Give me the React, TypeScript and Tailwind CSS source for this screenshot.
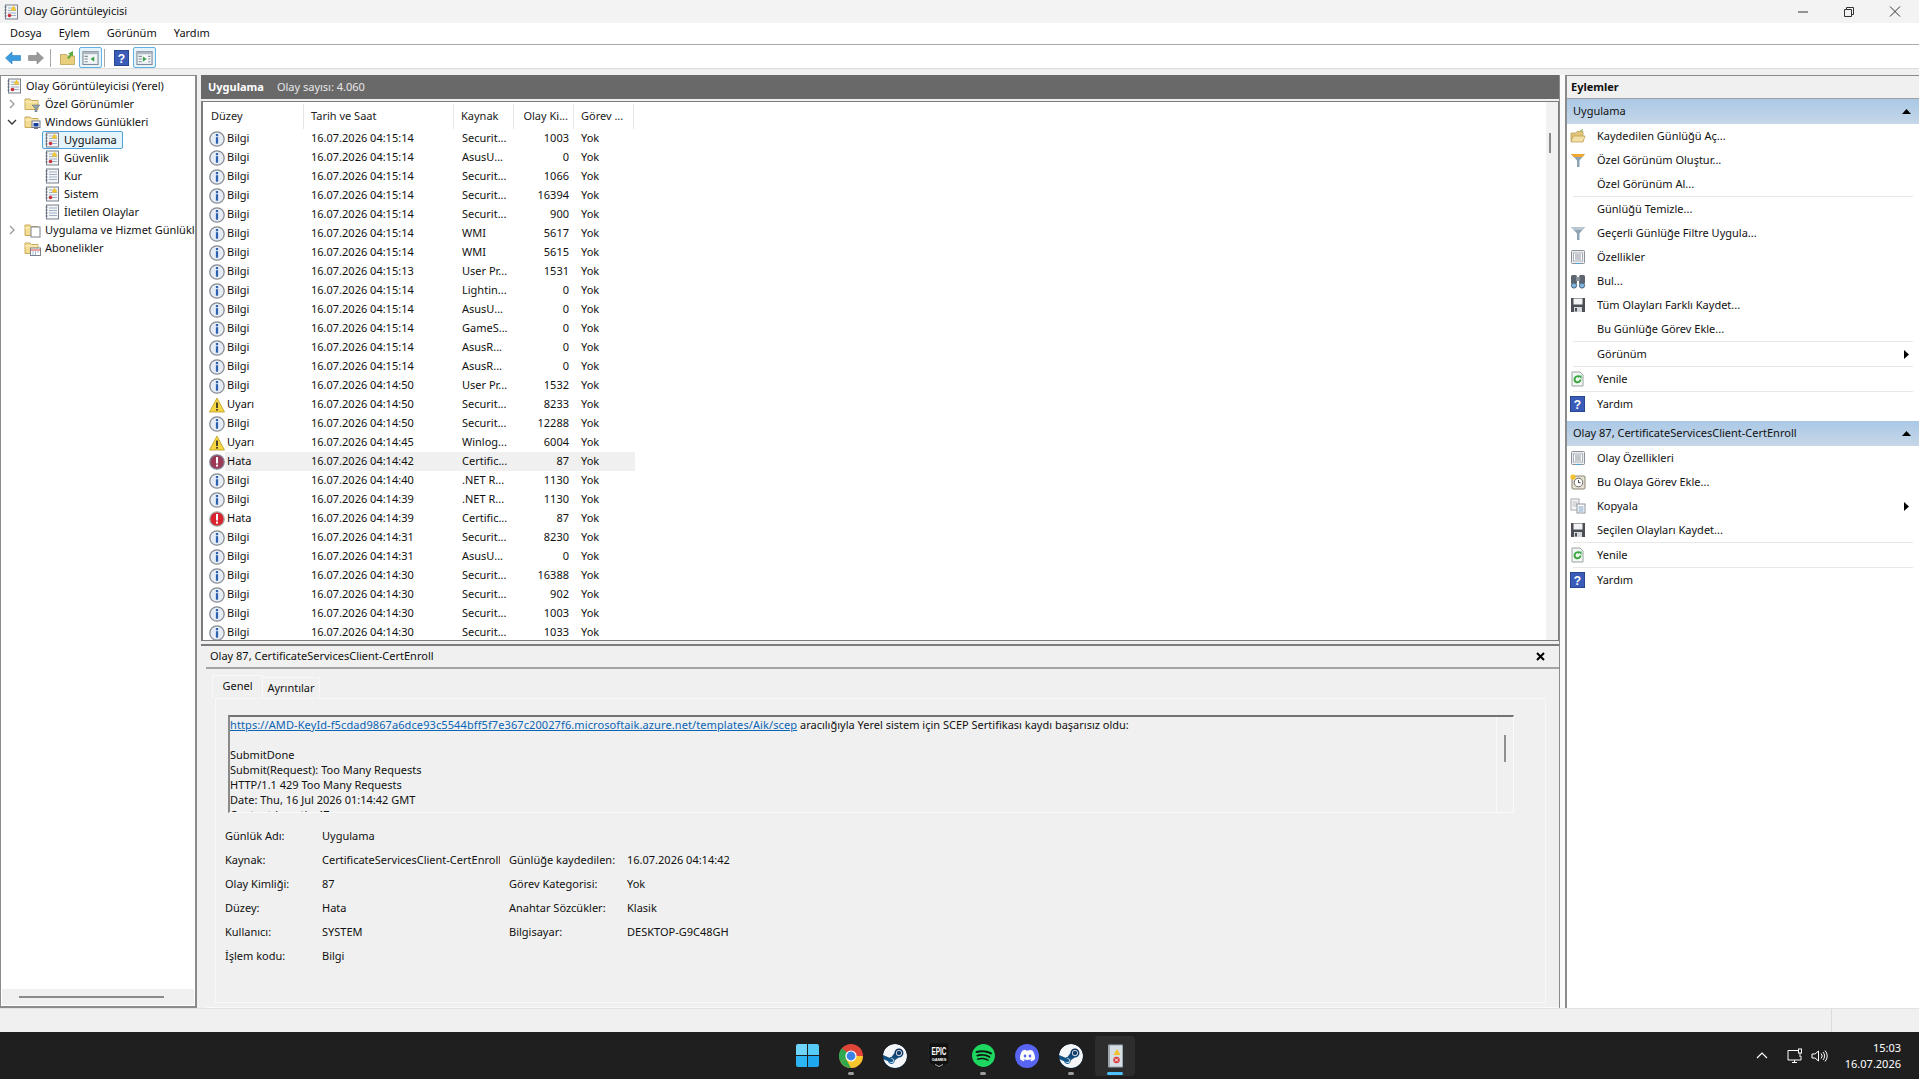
import { SiDiscord, SiSpotify, SiSteam } from 'react-icons/si';

type Level = 'Bilgi' | 'Uyarı' | 'Hata';

const rows: [Level, string, string, string][] = [
  ['Bilgi', '16.07.2026 04:15:14', 'Securit...', '1003'],
  ['Bilgi', '16.07.2026 04:15:14', 'AsusU...', '0'],
  ['Bilgi', '16.07.2026 04:15:14', 'Securit...', '1066'],
  ['Bilgi', '16.07.2026 04:15:14', 'Securit...', '16394'],
  ['Bilgi', '16.07.2026 04:15:14', 'Securit...', '900'],
  ['Bilgi', '16.07.2026 04:15:14', 'WMI', '5617'],
  ['Bilgi', '16.07.2026 04:15:14', 'WMI', '5615'],
  ['Bilgi', '16.07.2026 04:15:13', 'User Pr...', '1531'],
  ['Bilgi', '16.07.2026 04:15:14', 'Lightin...', '0'],
  ['Bilgi', '16.07.2026 04:15:14', 'AsusU...', '0'],
  ['Bilgi', '16.07.2026 04:15:14', 'GameS...', '0'],
  ['Bilgi', '16.07.2026 04:15:14', 'AsusR...', '0'],
  ['Bilgi', '16.07.2026 04:15:14', 'AsusR...', '0'],
  ['Bilgi', '16.07.2026 04:14:50', 'User Pr...', '1532'],
  ['Uyarı', '16.07.2026 04:14:50', 'Securit...', '8233'],
  ['Bilgi', '16.07.2026 04:14:50', 'Securit...', '12288'],
  ['Uyarı', '16.07.2026 04:14:45', 'Winlog...', '6004'],
  ['Hata', '16.07.2026 04:14:42', 'Certific...', '87'],
  ['Bilgi', '16.07.2026 04:14:40', '.NET R...', '1130'],
  ['Bilgi', '16.07.2026 04:14:39', '.NET R...', '1130'],
  ['Hata', '16.07.2026 04:14:39', 'Certific...', '87'],
  ['Bilgi', '16.07.2026 04:14:31', 'Securit...', '8230'],
  ['Bilgi', '16.07.2026 04:14:31', 'AsusU...', '0'],
  ['Bilgi', '16.07.2026 04:14:30', 'Securit...', '16388'],
  ['Bilgi', '16.07.2026 04:14:30', 'Securit...', '902'],
  ['Bilgi', '16.07.2026 04:14:30', 'Securit...', '1003'],
  ['Bilgi', '16.07.2026 04:14:30', 'Securit...', '1033'],
];

function InfoIcon() {
  return (
    <svg width="16" height="16" viewBox="0 0 16 16" className="shrink-0">
      <circle cx="8" cy="8" r="7.2" fill="#e6ecf5" stroke="#85898f" strokeWidth="1.3" />
      <rect x="6.9" y="3" width="2.2" height="2.2" fill="#2d62b0" />
      <rect x="6.9" y="6.2" width="2.2" height="6.5" fill="#2d62b0" />
    </svg>
  );
}

function WarnIcon() {
  return (
    <svg width="16" height="16" viewBox="0 0 16 16" className="shrink-0">
      <path d="M8 1 L15.5 15 H0.5 Z" fill="#f6d743" stroke="#b99a1c" strokeWidth="0.8" />
      <rect x="7.2" y="5.5" width="1.6" height="5.5" fill="#222" />
      <rect x="7.2" y="12" width="1.6" height="1.6" fill="#222" />
    </svg>
  );
}

function ErrorIcon({ dim }: { dim?: boolean }) {
  return (
    <svg width="16" height="16" viewBox="0 0 16 16" className="shrink-0">
      <circle cx="8" cy="8" r="7.2" fill={dim ? '#9c3a55' : '#d9232e'} stroke={dim ? '#7f8296' : '#a8a8a8'} strokeWidth="1.3" />
      <rect x="7" y="3" width="2" height="6.5" fill="#fff" />
      <rect x="7" y="10.6" width="2" height="2" fill="#fff" />
    </svg>
  );
}

function LogIcon({ alert = true }: { alert?: boolean }) {
  return (
    <svg width="15" height="16" viewBox="0 0 15 16" className="shrink-0">
      <rect x="1.5" y="1" width="12" height="14" fill="#f4f5f7" stroke="#77808c" />
      <path d="M0.5 3h2M0.5 6h2M0.5 9h2M0.5 12h2" stroke="#5b6470" />
      <path d="M4 4h8M4 6.5h8M4 9h8M4 11.5h8" stroke="#9fb0c4" />
      {alert && <path d="M9.5 1.5l3 5h-6z" fill="#f2c62f" />}
      {alert && <circle cx="5.5" cy="11.5" r="1.8" fill="#c8303a" />}
    </svg>
  );
}

function FolderIcon({ overlay }: { overlay?: 'filter' | 'pc' | 'doc' | 'cal' }) {
  return (
    <svg width="17" height="16" viewBox="0 0 17 16" className="shrink-0">
      <path d="M1 3h5l1.5 1.5H14v9H1z" fill="#f3dc94" stroke="#c9a95a" />
      <path d="M1 6h13" stroke="#fff2c4" />
      {overlay === 'filter' && <path d="M8 9h8l-3 3.2V16h-2v-3.8z" fill="#8fa3ad" stroke="#5c6b73" strokeWidth="0.5" />}
      {overlay === 'pc' && (
        <g>
          <rect x="8" y="7" width="8" height="6.5" fill="#fff" stroke="#6d7785" />
          <rect x="9.5" y="9" width="5" height="3.5" fill="#123f9e" />
          <rect x="10" y="14" width="4" height="1" fill="#6d7785" />
        </g>
      )}
      {overlay === 'doc' && <rect x="7" y="5" width="9" height="10" fill="#fff" stroke="#7a838c" />}
      {overlay === 'cal' && (
        <g>
          <rect x="6.5" y="8" width="10" height="7.5" fill="#fff" stroke="#7a838c" />
          <path d="M6.5 10h10" stroke="#d0463c" />
          <path d="M8.5 12h1M11 12h1M13.5 12h1M8.5 14h1M11 14h1" stroke="#3e74b8" />
        </g>
      )}
    </svg>
  );
}

function Chevron({ open }: { open?: boolean }) {
  return (
    <svg width="10" height="10" viewBox="0 0 10 10" className="shrink-0">
      {open ? (
        <path d="M1 3l4 4 4-4" fill="none" stroke="#333" strokeWidth="1.3" />
      ) : (
        <path d="M3 1l4 4-4 4" fill="none" stroke="#9a9a9a" strokeWidth="1.3" />
      )}
    </svg>
  );
}

function HelpIcon() {
  return (
    <svg width="15" height="16" viewBox="0 0 15 16" className="shrink-0">
      <rect x="0.5" y="0.5" width="14" height="15" fill="#3a5cb8" stroke="#2a4590" />
      <text x="7.5" y="12.5" textAnchor="middle" fontSize="12" fontWeight="700" fill="#fff" fontFamily="Liberation Sans">?</text>
    </svg>
  );
}

function RefreshIcon() {
  return (
    <svg width="15" height="16" viewBox="0 0 15 16" className="shrink-0">
      <path d="M2 1h8l3 3v11H2z" fill="#f3f7f3" stroke="#9aa5a0" />
      <path d="M10.5 8.5a3 3 0 1 1-1-2.4" fill="none" stroke="#39a843" strokeWidth="2" />
      <path d="M8 4.5h3.5V8z" fill="#39a843" />
    </svg>
  );
}

function PropsIcon() {
  return (
    <svg width="16" height="16" viewBox="0 0 16 16" className="shrink-0">
      <rect x="1.5" y="1.5" width="13" height="13" rx="1" fill="#eceef0" stroke="#8a9098" />
      <rect x="3.5" y="4" width="9" height="8" fill="#fff" stroke="#a8aeb5" />
      <path d="M5 6h6M5 8h6M5 10h6" stroke="#8a9098" />
      <rect x="6" y="14" width="4" height="1" fill="#4aa3df" />
    </svg>
  );
}

function SaveIcon() {
  return (
    <svg width="16" height="16" viewBox="0 0 16 16" className="shrink-0">
      <path d="M1 1h14v14H1z" fill="#4c4f55" />
      <rect x="3.5" y="1.5" width="9" height="6" fill="#f2f3f5" />
      <rect x="4" y="10" width="8" height="5" fill="#d5d8dc" />
      <rect x="5" y="11" width="2" height="3.5" fill="#4c4f55" />
    </svg>
  );
}

function FilterIcon({ tint }: { tint?: boolean }) {
  return (
    <svg width="16" height="16" viewBox="0 0 16 16" className="shrink-0">
      <path d="M1 2h14L9.5 8.5V15H7V8.5z" fill="#8ea3b3" />
      <path d="M1 2h14l-2.6 3H3.6z" fill={tint ? '#f0a92e' : '#b9c7d2'} />
    </svg>
  );
}

function OpenFolderIcon() {
  return (
    <svg width="16" height="16" viewBox="0 0 16 16" className="shrink-0">
      <path d="M1 5h5l1-1.5h6V13H1z" fill="#e2c579" stroke="#b7994f" strokeWidth="0.7" />
      <path d="M1 14l2-6h12l-2 6z" fill="#f2dfa4" stroke="#b7994f" strokeWidth="0.7" />
      <path d="M10 3l3-1.5" stroke="#6ab04c" />
    </svg>
  );
}

function BinocularsIcon() {
  return (
    <svg width="16" height="16" viewBox="0 0 16 16" className="shrink-0">
      <rect x="1" y="2" width="6" height="9" rx="1.5" fill="#5d6570" />
      <rect x="9" y="2" width="6" height="9" rx="1.5" fill="#5d6570" />
      <rect x="6" y="4" width="4" height="4" fill="#8b929c" />
      <circle cx="4" cy="12.5" r="2.6" fill="#7fb6e2" stroke="#4b6277" />
      <circle cx="12" cy="12.5" r="2.6" fill="#7fb6e2" stroke="#4b6277" />
    </svg>
  );
}

function TaskIcon() {
  return (
    <svg width="16" height="16" viewBox="0 0 16 16" className="shrink-0">
      <rect x="2" y="2" width="13" height="13" rx="1" fill="#e8e2d4" stroke="#8b8578" />
      <circle cx="8.5" cy="8.5" r="4.3" fill="#fff" stroke="#6b6b6b" />
      <path d="M8.5 6v2.7h2.2" fill="none" stroke="#444" />
      <circle cx="3" cy="3" r="2.6" fill="#f3c22e" />
    </svg>
  );
}

function CopyIcon() {
  return (
    <svg width="16" height="16" viewBox="0 0 16 16" className="shrink-0">
      <rect x="1" y="1" width="8" height="11" fill="#f7f7f7" stroke="#a5a9ae" />
      <path d="M2.5 4h5M2.5 6h5M2.5 8h5" stroke="#b9bdc2" />
      <rect x="7" y="6" width="8" height="9" fill="#fff" stroke="#8d949c" />
      <path d="M8.5 9h5M8.5 11h5M8.5 13h5" stroke="#7b9cc0" />
    </svg>
  );
}

function ToolButton({ side }: { side: 'left' | 'right' }) {
  return (
    <div className="flex h-[21px] w-[23px] items-center justify-center rounded-[2px] border border-[#66b1e3] bg-[#e5f3fb]">
      <svg width="17" height="14" viewBox="0 0 15 13">
        <rect x="0.5" y="0.5" width="14" height="12" fill="#f3f6f8" stroke="#7f8a94" />
        <rect x="0.5" y="0.5" width="14" height="2.5" fill="#aeb8c2" />
        <path d="M2 5h3M2 7.5h3M2 10h3" stroke="#7f8a94" />
        {side === 'left' ? <path d="M11 5v5L7.5 7.5z" fill="#3aa14a" /> : <path d="M6 5v5l3.5-2.5z" fill="#3aa14a" />}
        <path d="M11 5h2M11 7.5h2M11 10h2" stroke={side === 'left' ? 'none' : '#7f8a94'} />
      </svg>
    </div>
  );
}

function Toolbar() {
  return (
    <div className="flex h-[24px] items-center border-b border-[#dcdcdc] bg-white pl-[5px] pt-[2px]">
      <svg width="16" height="14" viewBox="0 0 16 14">
        <path d="M0.5 7L7 1v3.5h8.5v5H7V13z" fill="#3a9be0" stroke="#2a7cbc" strokeWidth="0.6" />
      </svg>
      <svg width="16" height="14" viewBox="0 0 16 14" className="ml-[7px]">
        <path d="M15.5 7L9 1v3.5H0.5v5H9V13z" fill="#9a9a9a" stroke="#7d7d7d" strokeWidth="0.6" />
      </svg>
      <div className="ml-[6px] h-[18px] w-px bg-[#a8a8a8]" />
      <svg width="15" height="15" viewBox="0 0 15 15" className="ml-[9px]">
        <path d="M0.5 4.5h6l1 1.5h7v8.5H0.5z" fill="#e9cf7b" stroke="#b1954a" strokeWidth="0.7" />
        <path d="M7 8l3-3.5-2-.8 5-2.7v5.5l-1.5-1L9 9z" fill="#58a83c" />
      </svg>
      <div className="ml-[4px]">
        <ToolButton side="left" />
      </div>
      <div className="ml-[2px] h-[18px] w-px bg-[#a8a8a8]" />
      <div className="ml-[9px]">
        <HelpIcon />
      </div>
      <div className="ml-[4px]">
        <ToolButton side="right" />
      </div>
    </div>
  );
}

function TreeRow({ indent, chevron, icon, label, selected }: { indent: string; chevron?: 'open' | 'closed'; icon: React.ReactNode; label: string; selected?: boolean }) {
  return (
    <div className={`flex h-[18px] items-center whitespace-nowrap ${indent}`}>
      {chevron && (
        <span className="ml-[6px] mr-[7px] flex">
          <Chevron open={chevron === 'open'} />
        </span>
      )}
      {selected ? (
        <div className="flex h-[18px] w-[81px] items-center rounded-[2px] border border-[#4da3dc] bg-[#e5f3fb] pl-[2px]">
          {icon}
          <span className="ml-[4px]">{label}</span>
        </div>
      ) : (
        <>
          {icon}
          <span className="ml-[4px]">{label}</span>
        </>
      )}
    </div>
  );
}

function TreePanel() {
  return (
    <div className="flex w-[197px] shrink-0 flex-col border-b-2 border-l border-r-2 border-t border-[#8b8b8b] bg-white">
      <div className="flex-1 overflow-hidden pt-[1px]">
        <TreeRow indent="pl-[6px]" icon={<LogIcon />} label="Olay Görüntüleyicisi (Yerel)" />
        <TreeRow indent="" chevron="closed" icon={<FolderIcon overlay="filter" />} label="Özel Görünümler" />
        <TreeRow indent="" chevron="open" icon={<FolderIcon overlay="pc" />} label="Windows Günlükleri" />
        <TreeRow indent="pl-[41px]" icon={<LogIcon />} label="Uygulama" selected />
        <TreeRow indent="pl-[44px]" icon={<LogIcon />} label="Güvenlik" />
        <TreeRow indent="pl-[44px]" icon={<LogIcon alert={false} />} label="Kur" />
        <TreeRow indent="pl-[44px]" icon={<LogIcon />} label="Sistem" />
        <TreeRow indent="pl-[44px]" icon={<LogIcon alert={false} />} label="İletilen Olaylar" />
        <TreeRow indent="" chevron="closed" icon={<FolderIcon overlay="doc" />} label="Uygulama ve Hizmet Günlükleri" />
        <TreeRow indent="pl-[23px]" icon={<FolderIcon overlay="cal" />} label="Abonelikler" />
      </div>
      <div className="mx-[1px] mb-[1px] flex h-[16px] items-center bg-[#f0f0f0] pl-[17px]">
        <div className="h-[2px] w-[145px] bg-[#8a8a8a]" />
      </div>
    </div>
  );
}

function EventList() {
  return (
    <div className="flex h-[540px] border border-l-2 border-[#7c7c7c] bg-white">
      <div className="min-w-0 flex-1 overflow-hidden pt-[2px]">
        <div className="flex h-[25px] items-start text-[#222]">
          <div className="h-full w-[101px] border-r border-[#e6e6e6] pl-[8px] leading-[23px]">Düzey</div>
          <div className="h-full w-[150px] border-r border-[#e6e6e6] pl-[7px] leading-[23px]">Tarih ve Saat</div>
          <div className="h-full w-[60px] border-r border-[#e6e6e6] pl-[7px] leading-[23px]">Kaynak</div>
          <div className="h-full w-[60px] border-r border-[#e6e6e6] pr-[5px] text-right leading-[23px]">Olay Ki...</div>
          <div className="h-full w-[60px] border-r border-[#e6e6e6] pl-[7px] leading-[23px]">Görev ...</div>
        </div>
        {rows.map((r, i) => (
          <div key={i} className="flex h-[19px] items-center">
            <div className="flex w-[101px] items-center pl-[6px]">
              {r[0] === 'Bilgi' && <InfoIcon />}
              {r[0] === 'Uyarı' && <WarnIcon />}
              {r[0] === 'Hata' && <ErrorIcon dim={i === 17} />}
              <span className={i === 17 ? 'flex h-[19px] flex-1 items-center bg-[#f0f0f0] pl-[2px]' : 'ml-[2px]'}>{r[0]}</span>
            </div>
            <div className={`flex h-[19px] items-center ${i === 17 ? 'bg-[#f0f0f0]' : ''}`}>
              <div className="w-[150px] pl-[7px]">{r[1]}</div>
              <div className="w-[60px] whitespace-nowrap pl-[8px]">{r[2]}</div>
              <div className="w-[60px] pr-[5px] text-right">{r[3]}</div>
              <div className="w-[61px] pl-[7px]">Yok</div>
            </div>
          </div>
        ))}
      </div>
      <div className="w-[12px] bg-[#f2f2f2] pl-[3px] pt-[31px]">
        <div className="h-[20px] w-[2px] bg-[#8a8a8a]" />
      </div>
    </div>
  );
}

function MessageBox() {
  return (
    <div className="flex h-[98px] overflow-hidden border-b border-l-2 border-r border-t-2 border-b-[#fafafa] border-l-[#8a8a8a] border-r-[#fafafa] border-t-[#737373]">
      <div className="min-w-0 flex-1 overflow-hidden leading-[15px]">
        <div className="whitespace-nowrap">
          <span className="tracking-[0.1px] text-[#0a64b4] underline">https://AMD-KeyId-f5cdad9867a6dce93c5544bff5f7e367c20027f6.microsoftaik.azure.net/templates/Aik/scep</span> aracılığıyla Yerel sistem için SCEP Sertifikası kaydı başarısız oldu:
        </div>
        <div className="mt-[15px]">SubmitDone</div>
        <div>Submit(Request): Too Many Requests</div>
        <div>HTTP/1.1 429 Too Many Requests</div>
        <div>Date: Thu, 16 Jul 2026 01:14:42 GMT</div>
        <div>Content-Length: 47</div>
      </div>
      <div className="w-[17px] border-l border-[#fafafa] pl-[7px] pt-[18px]">
        <div className="h-[27px] w-[2px] bg-[#8e8e8e]" />
      </div>
    </div>
  );
}

function Field({ label, value, label2, value2 }: { label: string; value: string; label2?: string; value2?: string }) {
  return (
    <div className="grid h-[24px] grid-cols-[97px_187px_118px_1fr] items-center">
      <div>{label}</div>
      <div className="w-[178px] overflow-hidden whitespace-nowrap">{value}</div>
      <div>{label2}</div>
      <div>{value2}</div>
    </div>
  );
}

function DetailPanel() {
  return (
    <div className="mt-[3px] flex flex-1 flex-col border-t-2 border-[#7c7c7c] bg-[#f0f0f0] pl-[5px]">
      <div className="flex h-[23px] items-center justify-between border-b-2 border-[#a3a3a3] pl-[4px] pr-[14px]">
        <span>Olay 87, CertificateServicesClient-CertEnroll</span>
        <svg width="9" height="9" viewBox="0 0 9 9">
          <path d="M1 1l7 7M8 1l-7 7" stroke="#000" strokeWidth="2" />
        </svg>
      </div>
      <div className="flex h-[29px] items-end pl-[6px]">
        <div className="flex h-[23px] w-[51px] items-center justify-center border-x border-t border-[#f8f8f8] bg-[#f0f0f0] pb-[2px]">Genel</div>
        <div className="flex h-[21px] w-[57px] items-center justify-center border-r border-t border-[#f8f8f8]">Ayrıntılar</div>
      </div>
      <div className="ml-[9px] mr-[13px] flex-1 border border-[#f8f8f8] px-[9px] pt-[16px]">
        <div className="ml-[3px] mr-[22px]">
          <MessageBox />
        </div>
        <div className="mt-[11px]">
          <Field label="Günlük Adı:" value="Uygulama" />
          <Field label="Kaynak:" value="CertificateServicesClient-CertEnroll" label2="Günlüğe kaydedilen:" value2="16.07.2026 04:14:42" />
          <Field label="Olay Kimliği:" value="87" label2="Görev Kategorisi:" value2="Yok" />
          <Field label="Düzey:" value="Hata" label2="Anahtar Sözcükler:" value2="Klasik" />
          <Field label="Kullanıcı:" value="SYSTEM" label2="Bilgisayar:" value2="DESKTOP-G9C48GH" />
          <Field label="İşlem kodu:" value="Bilgi" />
        </div>
      </div>
      <div className="h-[5px] border-b border-[#fafafa]" />
    </div>
  );
}

function SectionHead({ title }: { title: string }) {
  return (
    <div className="flex h-[25px] items-center justify-between bg-gradient-to-b from-[#aac8e6] to-[#c6d7e8] pl-[6px] pr-[8px]">
      <span>{title}</span>
      <svg width="9" height="5" viewBox="0 0 9 5">
        <path d="M0 5L4.5 0 9 5z" fill="#000" />
      </svg>
    </div>
  );
}

function Action({ icon, label, arrow, sep }: { icon?: React.ReactNode; label: string; arrow?: boolean; sep?: boolean }) {
  return (
    <>
      <div className="flex h-[24px] items-center pr-[10px]">
        <span className="flex w-[30px] justify-start pl-[3px]">{icon}</span>
        <span className="flex-1">{label}</span>
        {arrow && (
          <svg width="5" height="9" viewBox="0 0 5 9">
            <path d="M0 0l5 4.5L0 9z" fill="#000" />
          </svg>
        )}
      </div>
      {sep && <div className="ml-[6px] mr-[6px] h-px bg-[#e8e8e8]" />}
    </>
  );
}

function ActionsPanel() {
  return (
    <div className="flex-1 border-l-2 border-t border-[#8b8b8b] bg-white">
      <div className="flex h-[23px] items-center border-b border-[#a0a0a0] bg-[#f0f0f0] pl-[4px] font-bold">Eylemler</div>
      <SectionHead title="Uygulama" />
      <Action icon={<OpenFolderIcon />} label="Kaydedilen Günlüğü Aç..." />
      <Action icon={<FilterIcon tint />} label="Özel Görünüm Oluştur..." />
      <Action label="Özel Görünüm Al..." sep />
      <Action label="Günlüğü Temizle..." />
      <Action icon={<FilterIcon />} label="Geçerli Günlüğe Filtre Uygula..." />
      <Action icon={<PropsIcon />} label="Özellikler" />
      <Action icon={<BinocularsIcon />} label="Bul..." />
      <Action icon={<SaveIcon />} label="Tüm Olayları Farklı Kaydet..." />
      <Action label="Bu Günlüğe Görev Ekle..." sep />
      <Action label="Görünüm" arrow sep />
      <Action icon={<RefreshIcon />} label="Yenile" sep />
      <Action icon={<HelpIcon />} label="Yardım" />
      <div className="h-[5px]" />
      <SectionHead title="Olay 87, CertificateServicesClient-CertEnroll" />
      <Action icon={<PropsIcon />} label="Olay Özellikleri" />
      <Action icon={<TaskIcon />} label="Bu Olaya Görev Ekle..." />
      <Action icon={<CopyIcon />} label="Kopyala" arrow />
      <Action icon={<SaveIcon />} label="Seçilen Olayları Kaydet..." sep />
      <Action icon={<RefreshIcon />} label="Yenile" sep />
      <Action icon={<HelpIcon />} label="Yardım" />
    </div>
  );
}

function TaskItem({ children, dot, active }: { children: React.ReactNode; dot?: boolean; active?: boolean }) {
  return (
    <div className={`relative flex h-[40px] w-[40px] items-center justify-center rounded-[4px] ${active ? 'bg-[#2d2d2d]' : ''}`}>
      {children}
      {dot && <div className="absolute bottom-[1px] h-[3px] w-[6px] rounded-full bg-[#9d9d9d]" />}
      {active && <div className="absolute bottom-[1px] h-[3px] w-[16px] rounded-full bg-[#4cc2ff]" />}
    </div>
  );
}

function SteamLogo() {
  return (
    <div className="h-[24px] w-[24px] overflow-hidden rounded-full bg-gradient-to-b from-[#0e1f44] to-[#1074b0]">
      <SiSteam size={24} color="#f4f6f8" />
    </div>
  );
}

function Taskbar() {
  return (
    <div className="grid h-[47px] grid-cols-[1fr_auto_1fr] items-center bg-[#1f1f1f] text-white">
      <div />
      <div className="ml-[3px] flex gap-[4px]">
        <TaskItem>
          <div className="grid grid-cols-2 gap-[1px]">
            <div className="h-[11px] w-[11px] rounded-tl-[2px] bg-[#6fd6fb]" />
            <div className="h-[11px] w-[11px] rounded-tr-[2px] bg-[#55cdf8]" />
            <div className="h-[11px] w-[11px] rounded-bl-[2px] bg-[#2db5f3]" />
            <div className="h-[11px] w-[11px] rounded-br-[2px] bg-[#1ea7ee]" />
          </div>
        </TaskItem>
        <TaskItem dot>
          <svg width="24" height="24" viewBox="0 0 24 24">
            <circle cx="12" cy="12" r="12" fill="#e0453a" />
            <path d="M12 12L1.6 18A12 12 0 0 1 3 4.2z" fill="#2fa84f" />
            <path d="M12 12h12A12 12 0 0 1 12 24 12 12 0 0 1 1.6 18z" fill="#f7c52c" />
            <path d="M12 24A12 12 0 0 1 1.6 18L7 15z" fill="#2fa84f" />
            <circle cx="12" cy="12" r="5.6" fill="#fff" />
            <circle cx="12" cy="12" r="4.4" fill="#3b82e6" />
          </svg>
        </TaskItem>
        <TaskItem>
          <SteamLogo />
        </TaskItem>
        <TaskItem>
          <svg width="22" height="26" viewBox="0 0 22 26">
            <path d="M1 0h20v20l-10 6-10-6z" fill="#111" stroke="#333" strokeWidth="0.5" />
            <text x="11" y="11.5" textAnchor="middle" fontSize="10" fontWeight="700" fill="#fff" fontFamily="Liberation Sans Narrow, Liberation Sans" textLength="15" lengthAdjust="spacingAndGlyphs">EPIC</text>
            <text x="11" y="17.5" textAnchor="middle" fontSize="4" fontWeight="700" fill="#fff" fontFamily="Liberation Sans">GAMES</text>
            <path d="M7 21.5l4 2 4-2" stroke="#fff" strokeWidth="0.7" fill="none" />
          </svg>
        </TaskItem>
        <TaskItem dot>
          <div className="flex h-[23px] w-[23px] items-center justify-center rounded-full bg-[#111]">
            <SiSpotify size={23} color="#1ed760" />
          </div>
        </TaskItem>
        <TaskItem>
          <div className="flex h-[24px] w-[24px] items-center justify-center rounded-full bg-[#5865f2]">
            <SiDiscord size={15} color="#fff" />
          </div>
        </TaskItem>
        <TaskItem dot>
          <SteamLogo />
        </TaskItem>
        <TaskItem active>
          <svg width="17" height="24" viewBox="0 0 17 24">
            <rect x="1" y="0.5" width="15" height="23" rx="1" fill="#9aa6b0" />
            <rect x="3" y="1.5" width="12" height="21" fill="#d6dde3" />
            <path d="M10 5l3.5 6h-7z" fill="#f0c02c" />
            <circle cx="9.5" cy="16" r="3.2" fill="#d63a3e" />
            <path d="M8 14.5l3 3M11 14.5l-3 3" stroke="#fff" />
          </svg>
        </TaskItem>
      </div>
      <div className="flex items-center justify-end pr-[18px]">
        <svg width="12" height="7" viewBox="0 0 12 7" className="mr-[19px]">
          <path d="M1 6l5-5 5 5" fill="none" stroke="#fff" strokeWidth="1.2" />
        </svg>
        <svg width="16" height="16" viewBox="0 0 16 16" className="mr-[8px]">
          <path d="M11 2.5H1v9.5h13V8" fill="none" stroke="#fff" />
          <path d="M5 14.5h5M7.5 12v2.5" stroke="#fff" />
          <rect x="11.5" y="1" width="3" height="4" fill="none" stroke="#fff" />
          <path d="M13 5v4" stroke="#fff" />
        </svg>
        <svg width="17" height="14" viewBox="0 0 17 14" className="mr-[17px]">
          <path d="M1 5v4h3l3.5 3V2L4 5z" fill="none" stroke="#fff" />
          <path d="M10 4.5a3.5 3.5 0 0 1 0 5M12 3a6 6 0 0 1 0 8M14 1.5a8 8 0 0 1 0 11" fill="none" stroke="#fff" />
        </svg>
        <div className="text-right leading-[16px]">
          <div>15:03</div>
          <div>16.07.2026</div>
        </div>
      </div>
    </div>
  );
}

export default function App() {
  return (
    <div className="flex h-[1079px] w-[1919px] flex-col overflow-hidden bg-[#f0f0f0] font-['Noto_Sans',sans-serif] text-[11px] text-[#111]">
      <div className="flex h-[23px] items-center bg-[#f3f3f3] pl-[4px]">
        <LogIcon />
        <span className="ml-[5px] flex-1">Olay Görüntüleyicisi</span>
        <div className="flex items-center">
          <svg width="46" height="10" viewBox="0 0 46 10">
            <path d="M18 5h10" stroke="#333" />
          </svg>
          <svg width="46" height="10" viewBox="0 0 46 10">
            <path d="M18.5 2.5h7v7h-7zM20.5 2.5V.5h7v7h-2" fill="none" stroke="#333" />
          </svg>
          <svg width="46" height="11" viewBox="0 0 46 11" className="mr-[1px]">
            <path d="M18 .5l10 10M28 .5l-10 10" stroke="#333" />
          </svg>
        </div>
      </div>
      <div className="flex h-[22px] items-center gap-[17px] border-b border-[#a9a9a9] bg-white pl-[10px]">
        <span>Dosya</span>
        <span>Eylem</span>
        <span>Görünüm</span>
        <span>Yardım</span>
      </div>
      <Toolbar />
      <div className="flex min-h-0 flex-1 pt-[6px]">
        <TreePanel />
        <div className="flex w-[1362px] shrink-0 flex-col pl-[4px]">
          <div className="flex h-[24px] shrink-0 items-center gap-[13px] bg-[#696969] pl-[7px] text-white">
            <span className="font-bold">Uygulama</span>
            <span className="text-[#e8e8e8]">Olay sayısı: 4.060</span>
          </div>
          <div className="mt-[2px] shrink-0">
            <EventList />
          </div>
          <DetailPanel />
        </div>
        <div className="w-[6px] shrink-0 border-l border-[#8b8b8b] bg-[#fafafa]" />
        <ActionsPanel />
      </div>
      <div className="flex h-[24px] items-stretch border-t border-[#e2e2e2] bg-[#f0f0f0]">
        <div className="w-[1832px] border-r border-[#dcdcdc]" />
      </div>
      <Taskbar />
    </div>
  );
}
